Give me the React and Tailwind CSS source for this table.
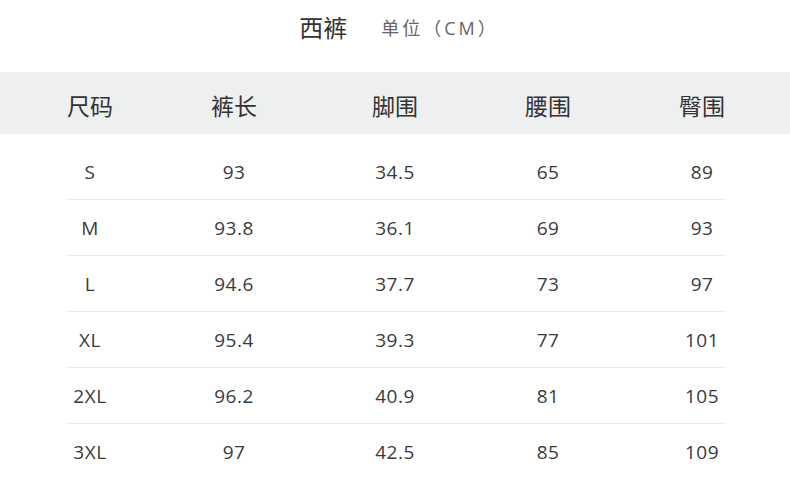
import React from "react";

const rows = [
    ["S", "93", "34.5", "65", "89"],
    ["M", "93.8", "36.1", "69", "93"],
    ["L", "94.6", "37.7", "73", "97"],
    ["XL", "95.4", "39.3", "77", "101"],
    ["2XL", "96.2", "40.9", "81", "105"],
    ["3XL", "97", "42.5", "85", "109"],
];

const heads = ["尺码", "裤长", "脚围", "腰围", "臀围"];

const font = { fontFamily: '"Open Sans", "Noto Sans CJK SC", sans-serif' };

const App = () => {
    return (
        <div className="w-[790px] h-[504px] bg-white overflow-hidden text-[#333]" style={font}>
            {/* Title */}
            <div className="h-[72px] flex justify-center items-start pt-[11px] gap-[34px] pl-[8px]">
                <span className="text-[24px] leading-[34px] text-[#333]">西裤</span>
                <span className="text-[18px] leading-[34px] text-[#666] tracking-[3px]">单位（CM）</span>
            </div>

            {/* Header */}
            <div className="h-[62px] bg-[#eef0ef] grid grid-cols-[180px_108px_214px_92px_196px] items-center pt-[6px]">
                {heads.map((h, i) => (
                    <div key={h} className={`text-center text-[23px] ${i === 4 ? "pl-[20px]" : ""}`}>
                        {h}
                    </div>
                ))}
            </div>

            {/* Body */}
            <div className="pt-[10px]">
                {rows.map((r, idx) => (
                    <div key={r[0]}>
                        <div className="h-[55px] pt-[2px] grid grid-cols-[180px_108px_214px_92px_196px] items-center">
                            {r.map((c, i) => (
                                <div key={i} className={`text-center text-[19px] tracking-[0.5px] text-[#3a3a3a] ${i === 4 ? "pl-[20px]" : ""}`}>
                                    {c}
                                </div>
                            ))}
                        </div>
                        {idx < rows.length - 1 && <div className="ml-[67px] w-[658px] h-px bg-[#e8e8e8]"></div>}
                    </div>
                ))}
            </div>
        </div>
    );
};

export default App;
